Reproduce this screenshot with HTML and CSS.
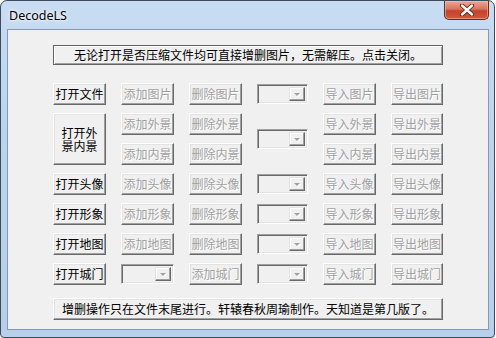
FILE: index.html
```html
<!DOCTYPE html>
<html lang="zh-CN">
<head>
  <meta charset="UTF-8">
  <title>DecodeLS</title>
  <link rel="stylesheet" href="styles.css">
</head>
<body>
  <div class="window">
    <div class="titlebar">
      <span class="title">DecodeLS</span>
      <div class="close">
        <svg width="16" height="12" viewBox="0 0 16 12">
          <path d="M3 1.5 L13 10.5 M13 1.5 L3 10.5" stroke="#5a2418" stroke-width="4.2" stroke-linecap="round"/>
          <path d="M3 1.5 L13 10.5 M13 1.5 L3 10.5" stroke="#ffffff" stroke-width="2.4" stroke-linecap="round"/>
        </svg>
      </div>
    </div>

    <div class="client">
      <button class="btn wide default">无论打开是否压缩文件均可直接增删图片，无需解压。点击关闭。</button>

      <div class="grid">
        <!-- 图片 -->
        <button class="btn">打开文件</button>
        <button class="btn" disabled>添加图片</button>
        <button class="btn" disabled>删除图片</button>
        <div class="combo"><span class="drop"><i></i></span></div>
        <button class="btn" disabled>导入图片</button>
        <button class="btn" disabled>导出图片</button>

        <!-- 外景 / 内景 -->
        <button class="btn tall">打开外景内景</button>
        <button class="btn" disabled>添加外景</button>
        <button class="btn" disabled>删除外景</button>
        <div class="combo span2"><span class="drop"><i></i></span></div>
        <button class="btn" disabled>导入外景</button>
        <button class="btn" disabled>导出外景</button>
        <button class="btn" disabled>添加内景</button>
        <button class="btn" disabled>删除内景</button>
        <button class="btn" disabled>导入内景</button>
        <button class="btn" disabled>导出内景</button>

        <!-- 头像 -->
        <button class="btn">打开头像</button>
        <button class="btn" disabled>添加头像</button>
        <button class="btn" disabled>删除头像</button>
        <div class="combo"><span class="drop"><i></i></span></div>
        <button class="btn" disabled>导入头像</button>
        <button class="btn" disabled>导出头像</button>

        <!-- 形象 -->
        <button class="btn">打开形象</button>
        <button class="btn" disabled>添加形象</button>
        <button class="btn" disabled>删除形象</button>
        <div class="combo"><span class="drop"><i></i></span></div>
        <button class="btn" disabled>导入形象</button>
        <button class="btn" disabled>导出形象</button>

        <!-- 地图 -->
        <button class="btn">打开地图</button>
        <button class="btn" disabled>添加地图</button>
        <button class="btn" disabled>删除地图</button>
        <div class="combo"><span class="drop"><i></i></span></div>
        <button class="btn" disabled>导入地图</button>
        <button class="btn" disabled>导出地图</button>

        <!-- 城门 -->
        <button class="btn">打开城门</button>
        <div class="combo"><span class="drop"><i></i></span></div>
        <button class="btn" disabled>添加城门</button>
        <div class="combo"><span class="drop"><i></i></span></div>
        <button class="btn" disabled>导入城门</button>
        <button class="btn" disabled>导出城门</button>
      </div>

      <button class="btn wide bottom">增删操作只在文件末尾进行。轩辕春秋周瑜制作。天知道是第几版了。</button>
    </div>
  </div>
</body>
</html>
```

FILE: styles.css
```css
body {
  margin: 0;
  width: 496px;
  height: 338px;
  overflow: hidden;
  background: #ffffff;
  font-family: "Noto Sans CJK SC", sans-serif;
}

.window {
  box-sizing: border-box;
  width: 495px;
  height: 338px;
  border: 1px solid #3c4a5c;
  border-radius: 7px 7px 4px 4px;
  background: linear-gradient(180deg, #c8dcf2 0%, #bcd3ec 40%, #b6cfea 100%);
  padding: 0 5px 7px 6px;
  display: flex;
  flex-direction: column;
}

.titlebar {
  height: 28px;
  display: flex;
  align-items: flex-start;
  justify-content: space-between;
}

.title {
  font-family: "Noto Sans", sans-serif;
  font-size: 12.5px;
  color: #000;
  margin: 6px 0 0 2px;
  text-shadow: 0 0 6px #ffffff, 0 0 3px #ffffff;
}

.close {
  box-sizing: border-box;
  width: 45px;
  height: 19px;
  border: 1px solid #6b2a1c;
  border-top: none;
  border-radius: 0 0 5px 5px;
  background: linear-gradient(180deg, #e9a99a 0%, #d8735e 45%, #c4422a 55%, #cf5a3c 100%);
  box-shadow: inset 0 0 0 1px rgba(255, 200, 180, 0.5);
  display: flex;
  align-items: center;
  justify-content: center;
}

.client {
  flex: 1;
  background: #f0f0f0;
  border: 1px solid #8499b4;
  padding: 15px 0 0 45px;
  display: flex;
  flex-direction: column;
  align-items: flex-start;
}

.btn {
  box-sizing: border-box;
  margin: 0;
  padding: 0;
  height: 22px;
  font-family: "Noto Sans CJK SC", sans-serif;
  font-size: 12px;
  line-height: 12px;
  color: #000;
  background: #f0f0f0;
  border: 1px solid;
  border-color: #ffffff #696969 #696969 #ffffff;
  box-shadow: inset -1px -1px 0 #a0a0a0, inset 1px 1px 0 #e3e3e3;
  white-space: nowrap;
}

.btn:disabled {
  color: #a0a0a0;
  text-shadow: 1px 1px 0 #ffffff;
}

.wide {
  width: 390px;
}

.default {
  height: 20px;
  border-color: #646464;
  box-shadow: inset 1px 1px 0 #ffffff, inset -1px -1px 0 #a0a0a0;
}

.bottom {
  margin-top: 13px;
}

.grid {
  margin-top: 18px;
  display: grid;
  grid-template-columns: 53px 53px 53px 51px 53px 52px;
  grid-auto-rows: 22px;
  column-gap: 15px;
  row-gap: 8px;
}

.tall {
  grid-row: span 2;
  height: auto;
  white-space: normal;
  padding: 0 4px;
  line-height: 13px;
}

.combo {
  box-sizing: border-box;
  height: 20px;
  align-self: center;
  background: #f0f0f0;
  border: 1px solid;
  border-color: #a0a0a0 #ffffff #ffffff #a0a0a0;
  box-shadow: inset 1px 1px 0 #696969, inset -1px -1px 0 #e3e3e3;
  padding: 2px;
  display: flex;
  justify-content: flex-end;
}

.span2 {
  grid-row: span 2;
}

.drop {
  box-sizing: border-box;
  width: 16px;
  height: 14px;
  background: #f0f0f0;
  border: 1px solid;
  border-color: #e3e3e3 #696969 #696969 #e3e3e3;
  box-shadow: inset -1px -1px 0 #a0a0a0, inset 1px 1px 0 #ffffff;
  display: flex;
  align-items: center;
  justify-content: center;
}

.drop i {
  width: 0;
  height: 0;
  border-left: 3px solid transparent;
  border-right: 3px solid transparent;
  border-top: 3px solid #a0a0a0;
  filter: drop-shadow(1px 1px 0 #ffffff);
}
```
